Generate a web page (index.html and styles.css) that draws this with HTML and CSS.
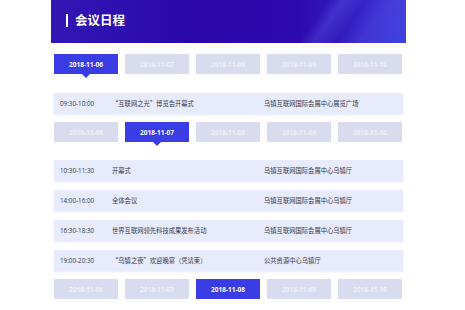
FILE: index.html
```html
<!DOCTYPE html>
<html lang="zh-CN">
<head>
<meta charset="utf-8">
<link rel="stylesheet" href="styles.css">
</head>
<body>
<div class="page">
  <div class="banner"><span class="bar"></span><h1 class="title">会议日程</h1></div>
  <div class="content">
    <div class="tabs t1">
      <div class="tab active">2018-11-06</div>
      <div class="tab">2018-11-07</div>
      <div class="tab">2018-11-08</div>
      <div class="tab">2018-11-09</div>
      <div class="tab">2018-11-10</div>
    </div>
    <div class="rows r1">
      <div class="row"><span class="time">09:30-10:00</span><span class="event">“互联网之光”博览会开幕式</span><span class="place">乌镇互联网国际会展中心展览广场</span></div>
    </div>
    <div class="tabs t2">
      <div class="tab">2018-11-06</div>
      <div class="tab active">2018-11-07</div>
      <div class="tab">2018-11-08</div>
      <div class="tab">2018-11-09</div>
      <div class="tab">2018-11-10</div>
    </div>
    <div class="rows r2">
      <div class="row"><span class="time">10:30-11:30</span><span class="event">开幕式</span><span class="place">乌镇互联网国际会展中心乌镇厅</span></div>
      <div class="row"><span class="time">14:00-16:00</span><span class="event">全体会议</span><span class="place">乌镇互联网国际会展中心乌镇厅</span></div>
      <div class="row"><span class="time">16:30-18:30</span><span class="event">世界互联网领先科技成果发布活动</span><span class="place">乌镇互联网国际会展中心乌镇厅</span></div>
      <div class="row"><span class="time">19:00-20:30</span><span class="event">“乌镇之夜”欢迎晚宴（凭请柬）</span><span class="place">公共资源中心乌镇厅</span></div>
    </div>
    <div class="tabs t3">
      <div class="tab">2018-11-06</div>
      <div class="tab">2018-11-07</div>
      <div class="tab active">2018-11-08</div>
      <div class="tab">2018-11-09</div>
      <div class="tab">2018-11-10</div>
    </div>
  </div>
</div>
</body>
</html>
```
FILE: styles.css
```css
html, body {
  margin: 0;
  padding: 0;
  background: #ffffff;
}
body {
  font-family: "Noto Sans CJK SC", "Noto Sans", sans-serif;
  color: #333;
}
.page {
  width: 355px;
  margin-left: 51px;
}
.banner {
  height: 43px;
  display: flex;
  align-items: center;
  padding-left: 15px;
  box-sizing: border-box;
  background:
    linear-gradient(125deg, rgba(255,255,255,0) 0%, rgba(255,255,255,0) 72%, rgba(120,120,255,0.25) 76%, rgba(255,255,255,0) 82%, rgba(110,110,255,0.22) 88%, rgba(70,80,230,0.5) 100%),
    linear-gradient(90deg, #3216b4 0%, #2a08aa 40%, #2c0aae 70%, #3a34d4 100%);
}
.bar {
  width: 2px;
  height: 13px;
  background: #ffffff;
  margin-right: 7px;
  margin-top: -2px;
}
.title {
  margin: 0;
  margin-top: -2px;
  color: #ffffff;
  font-size: 12.5px;
  font-weight: 700;
  letter-spacing: 0;
  line-height: 1;
}
.content {
  padding: 0 3px;
}
.tabs {
  display: flex;
  gap: 7px;
}
.t1 { margin-top: 11px; }
.t2 { margin-top: 8px; }
.t3 { margin-top: 8px; }
.tab {
  position: relative;
  width: 64px;
  height: 20px;
  background: #d9dbee;
  color: #eef0fa;
  font-size: 6.5px;
  font-weight: 700;
  display: flex;
  align-items: center;
  justify-content: center;
  font-family: "Open Sans", "Noto Sans", sans-serif;
}
.tab.active {
  background: #3a3ce6;
  color: #ffffff;
}
.tab.active::after {
  content: "";
  position: absolute;
  left: 50%;
  bottom: -4px;
  margin-left: -4px;
  border-left: 4px solid transparent;
  border-right: 4px solid transparent;
  border-top: 4px solid #3a3ce6;
}
.rows {
  display: flex;
  flex-direction: column;
  gap: 9px;
}
.r1 { margin-top: 19px; }
.r2 { margin-top: 18px; }
.row {
  height: 21px;
  background: #e7ebfb;
  box-shadow: 0 1px 2px rgba(150,160,210,0.25);
  display: flex;
  align-items: center;
  font-size: 6.3px;
  color: #3a3a4a;
}
.time {
  width: 52px;
  padding-left: 6px;
  font-family: "Open Sans", "Noto Sans", sans-serif;
}
.event {
  width: 152px;
}
.place {
  flex: 1;
}
```
